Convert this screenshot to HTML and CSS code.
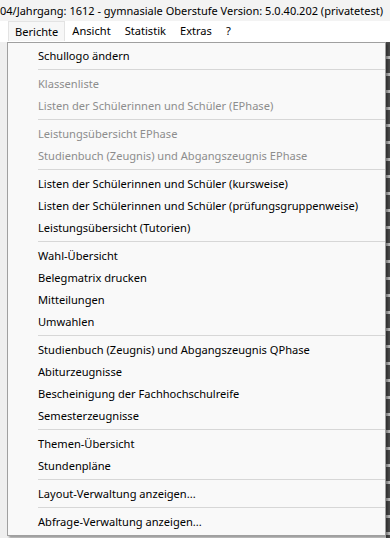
FILE: index.html
```html
<!DOCTYPE html>
<html lang="de">
<head>
    <meta charset="UTF-8">
    <link rel="stylesheet" href="styles.css">
    <title>Berichte</title>
</head>
<body>
    <div class="title-bar">04/Jahrgang: 1612 - gymnasiale Oberstufe Version: 5.0.40.202 (privatetest)</div>

    <div class="menu-bar">
        <span class="menu-title open">Berichte</span>
        <span class="menu-title">Ansicht</span>
        <span class="menu-title">Statistik</span>
        <span class="menu-title">Extras</span>
        <span class="menu-title">?</span>
    </div>

    <div class="workspace">
        <div class="left-strip"></div>
        <div class="right-strip"></div>

        <ul class="dropdown">
            <li class="item">Schullogo ändern</li>
            <li class="sep"></li>
            <li class="item disabled">Klassenliste</li>
            <li class="item disabled">Listen der Schülerinnen und Schüler (EPhase)</li>
            <li class="sep"></li>
            <li class="item disabled">Leistungsübersicht EPhase</li>
            <li class="item disabled">Studienbuch (Zeugnis) und Abgangszeugnis EPhase</li>
            <li class="sep"></li>
            <li class="item">Listen der Schülerinnen und Schüler (kursweise)</li>
            <li class="item">Listen der Schülerinnen und Schüler (prüfungsgruppenweise)</li>
            <li class="item">Leistungsübersicht (Tutorien)</li>
            <li class="sep"></li>
            <li class="item">Wahl-Übersicht</li>
            <li class="item">Belegmatrix drucken</li>
            <li class="item">Mitteilungen</li>
            <li class="item">Umwahlen</li>
            <li class="sep"></li>
            <li class="item">Studienbuch (Zeugnis) und Abgangszeugnis QPhase</li>
            <li class="item">Abiturzeugnisse</li>
            <li class="item">Bescheinigung der Fachhochschulreife</li>
            <li class="item">Semesterzeugnisse</li>
            <li class="sep"></li>
            <li class="item">Themen-Übersicht</li>
            <li class="item">Stundenpläne</li>
            <li class="sep"></li>
            <li class="item">Layout-Verwaltung anzeigen...</li>
            <li class="sep"></li>
            <li class="item">Abfrage-Verwaltung anzeigen...</li>
        </ul>
    </div>
</body>
</html>
```

FILE: styles.css
```css
body {
    margin: 0;
    width: 390px;
    height: 538px;
    overflow: hidden;
    font-family: 'Noto Sans', 'Liberation Sans', sans-serif;
    font-size: 11.1px;
    color: #000;
    background-color: #f0f0f0;
}

.title-bar {
    height: 21px;
    line-height: 21px;
    white-space: nowrap;
    overflow: hidden;
    background-color: #f3f3f3;
    font-size: 11px;
}

.menu-bar {
    height: 21px;
    display: flex;
    padding-left: 8px;
    background-color: #ffffff;
}

.menu-title {
    padding: 0 7px;
    line-height: 19px;
    height: 19px;
}

.menu-title.open {
    background-color: #f7f7f7;
    border: 1px solid #e3e3e3;
    border-bottom: none;
    padding: 0 6px;
}

.workspace {
    position: relative;
    height: 496px;
    display: flex;
}

.left-strip {
    width: 7px;
    background-color: #efefef;
}

.right-strip {
    margin-left: auto;
    width: 4px;
    background: repeating-linear-gradient(to bottom, #4a4a4a 0, #4a4a4a 14px, #bdbdbd 14px, #bdbdbd 17px);
}

.dropdown {
    position: absolute;
    top: 0;
    left: 7px;
    width: 377px;
    margin: 0;
    padding: 2px 0;
    list-style: none;
    background-color: #f9f9f9;
    border: 1px solid #a0a0a0;
    box-shadow: 2px 2px 2px rgba(0, 0, 0, 0.35);
}

.item {
    height: 22px;
    line-height: 22px;
    padding-left: 30px;
    white-space: nowrap;
}

.disabled {
    color: #8d8d8d;
}

.sep {
    height: 1px;
    margin: 2px 0 3px 30px;
    background-color: #d7d7d7;
}
```
